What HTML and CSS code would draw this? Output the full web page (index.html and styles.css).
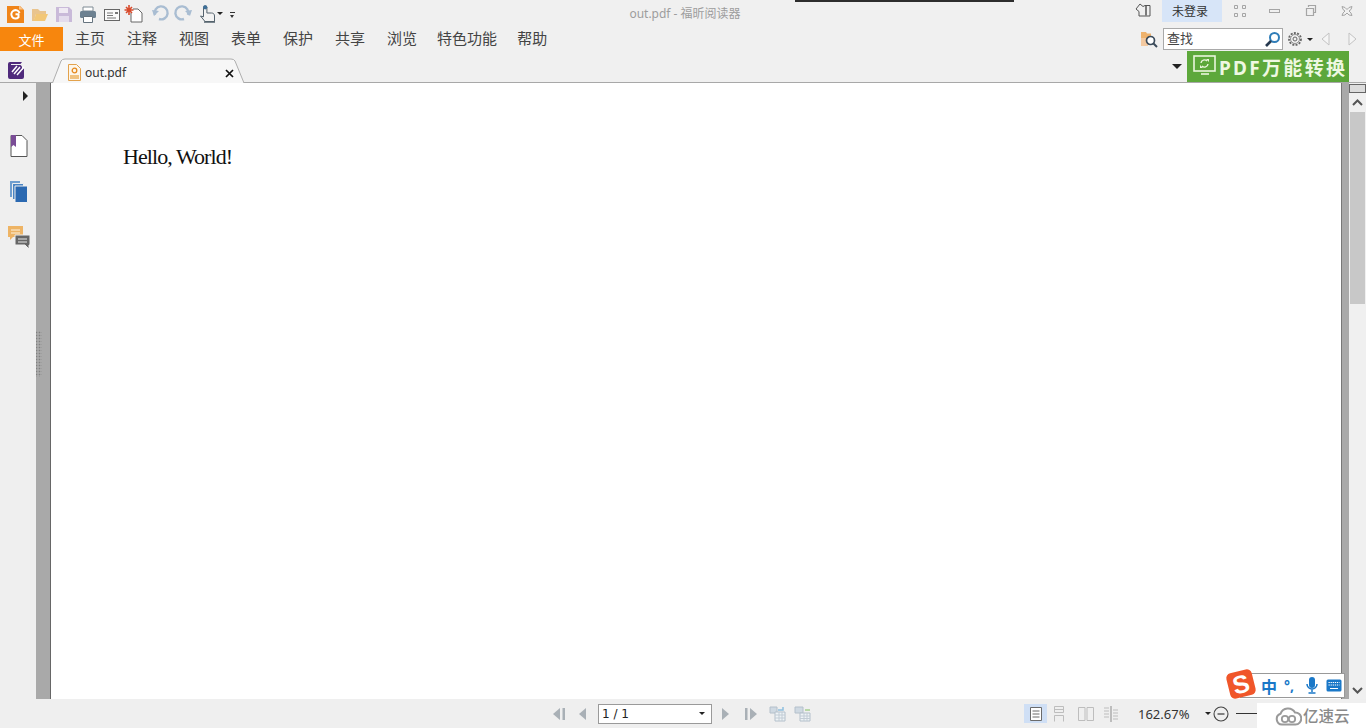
FILE: index.html
```html
<!DOCTYPE html>
<html lang="zh-CN">
<head>
<meta charset="utf-8">
<title>out.pdf - 福昕阅读器</title>
<link rel="stylesheet" href="styles.css">
</head>
<body>
<div class="app">
  <div class="notch"></div>

  <header class="titlebar">
    <div class="quick">
      <svg class="qi" width="24" height="22" viewBox="0 0 24 22"><path d="M5 5h13l4 4v13H5z" fill="#f0851a"/><path d="M17 4.500v4h4z" fill="#f9c78f"/><path d="M17.500 12a4.200 4.200 0 1 0-1 4.300v-3h-3" fill="none" stroke="#fff" stroke-width="2"/></svg>
      <svg class="qi" width="26" height="22" viewBox="0 0 26 22"><path d="M6 8h6l2 2h6v3H10l-2 7H6z" fill="#e9c48e"/><path d="M10 13h12l-3 7H7.500z" fill="#f2c777"/></svg>
      <svg class="qi" width="24" height="22" viewBox="0 0 24 22"><path d="M4 6h13l3 3v12H4z" fill="#c9bad9"/><path d="M7 7h9v5H7z" fill="#efeaf3"/><path d="M7 15h10v6H7z" fill="#e3dcec"/></svg>
      <svg class="qi" width="24" height="22" viewBox="0 0 24 22"><path d="M7 6h10v4H7z" fill="#fff" stroke="#7f8b94"/><rect x="4" y="10" width="16" height="7" rx="1.500" fill="#6d8191"/><path d="M7.500 15.500h9v6h-9z" fill="#fff" stroke="#66747f"/></svg>
      <svg class="qi" width="24" height="22" viewBox="0 0 24 22"><rect x="4.500" y="8.500" width="15" height="11" fill="#fafafa" stroke="#666"/><path d="M7 12h6M7 14.500h6M7 17h9" stroke="#777"/><path d="M15 11h3v2h-3z" fill="#777"/></svg>
      <svg class="qi" width="23" height="22" viewBox="0 0 23 22"><path d="M9 8h5l4 4v9H7v-9" fill="#fff" stroke="#666"/><path d="M5 4v10M0.500 9h9M2 6l6 6M8 6l-6 6" stroke="#d84a2b" stroke-width="1.600"/></svg>
      <svg class="qi" width="25" height="22" viewBox="0 0 25 22"><path d="M8 16a6.500 6.500 0 1 1 4 4" fill="none" stroke="#a9bdd2" stroke-width="2.400" transform="translate(0 -2)"/><path d="M5 9l7 1-5 5z" fill="#a9bdd2"/></svg>
      <svg class="qi" width="24" height="22" viewBox="0 0 24 22"><path d="M16 16a6.500 6.500 0 1 0-4 4" fill="none" stroke="#a9bdd2" stroke-width="2.400" transform="translate(0 -2)"/><path d="M20 9l-7 1 5 5z" fill="#a9bdd2"/></svg>
      <svg class="qi hand" width="18" height="22" viewBox="0 0 18 22"><path d="M4.500 6.500a1.700 1.700 0 0 1 3.400 0V12h4.500c2 0 3.100 1.100 3.100 3v5.500H6L1.500 15l3 .8z" fill="#f3f3f3" stroke="#55636e"/><circle cx="6.200" cy="6.300" r="2.100" fill="#3d6f98"/><path d="M5 21h11" stroke="#55636e" stroke-width="1.500"/></svg>
      <span class="drop qdrop"></span>
      <span class="more"></span>
    </div>
    <div class="wintitle">out.pdf - 福昕阅读器</div>
    <div class="winctl">
      <svg class="skin" width="16" height="16" viewBox="0 0 16 16"><path d="M1 7l4-5 3 2.500 2-1h5v10.500H4V9.500z" fill="none" stroke="#555"/><path d="M11 4v9.500" stroke="#555" stroke-width="1.500"/></svg>
      <div class="login">未登录</div>
      <svg class="wi wi-grid" width="14" height="14" viewBox="0 0 14 14"><path d="M1.500 1.500h3v3h-3zM9.500 1.500h3v3h-3zM1.500 9.500h3v3h-3zM9.500 9.500h3v3h-3z" fill="none" stroke="#a5a5a5"/></svg>
      <svg class="wi wi-min" width="12" height="14" viewBox="0 0 12 14"><rect x="0.500" y="5.500" width="10" height="3" fill="none" stroke="#a5a5a5"/></svg>
      <svg class="wi wi-max" width="12" height="14" viewBox="0 0 12 14"><path d="M3.500 3V1.500h7v7H9M1.500 4.500h7v7h-7z" fill="none" stroke="#a5a5a5" stroke-width="1.200"/></svg>
      <svg class="wi wi-close" width="12" height="14" viewBox="0 0 12 14"><path d="M1 2.500l3 1 2 2 2-2 3-1-1 3-2 1.500 2 2 1 2.500-3-.5-2-2-2 2-3 .5 1-2.500 2-2-2-1.500z" fill="none" stroke="#a5a5a5"/></svg>
    </div>
  </header>

  <nav class="menubar">
    <div class="filebtn">文件</div>
    <ul class="menu">
      <li>主页</li><li>注释</li><li>视图</li><li>表单</li><li>保护</li><li>共享</li><li>浏览</li><li class="wide">特色功能</li><li>帮助</li>
    </ul>
    <div class="searchwrap">
      <svg class="findfolder" width="18" height="18" viewBox="0 0 18 18"><path d="M1 2h5l1 1.500h4V8H1z" fill="#eeb26d"/><path d="M1 8h7v8H1z" fill="#f3c9a0"/><circle cx="10.500" cy="10.500" r="4" fill="#fff" stroke="#3a4a5a" stroke-width="1.700"/><path d="M13.500 13.500l3.500 3.500" stroke="#3a4a5a" stroke-width="2"/></svg>
      <div class="search"><span>查找</span>
        <svg width="17" height="17" viewBox="0 0 17 17"><circle cx="10.500" cy="6.500" r="4.500" fill="#fff" stroke="#2f7db8" stroke-width="2"/><path d="M7 10l-5 5" stroke="#26394f" stroke-width="2.600"/></svg>
      </div>
      <svg class="gear" width="16" height="16" viewBox="0 0 16 16"><circle cx="8" cy="8" r="6" fill="none" stroke="#666" stroke-width="1.800" stroke-dasharray="2 1.300"/><circle cx="8" cy="8" r="4.500" fill="none" stroke="#777" stroke-width=".8"/><circle cx="8" cy="8" r="2" fill="none" stroke="#666"/></svg>
      <span class="drop"></span>
      <svg class="navl" width="9" height="14" viewBox="0 0 9 14"><path d="M8 1v12L1 7z" fill="#f5f5f5" stroke="#c3c3c3"/></svg>
      <svg class="navr" width="9" height="14" viewBox="0 0 9 14"><path d="M1 1v12l7-6z" fill="#f5f5f5" stroke="#c3c3c3"/></svg>
    </div>
  </nav>

  <div class="tabbar">
    <svg class="fx" width="20" height="19" viewBox="0 0 20 19"><path d="M3 1h12l-1.500 2H4v12h11V9l2-2v9a2 2 0 0 1-2 2H3a2 2 0 0 1-2-2V3a2 2 0 0 1 2-2z" fill="#4f2a7c"/><path d="M4 4h9.500L15 5.500V15H4z" fill="#4f2a7c"/><path d="M5 11l5-6M7 13l6-7M10 14l7-8" stroke="#fff" stroke-width="1.500"/></svg>
    <div class="tab">
      <svg class="tabshape" width="193" height="25" viewBox="0 0 193 25"><path d="M0.500 25L9 3Q10 1 13 1H179Q182 1 183 3L192 25" fill="#f7f7f7" stroke="#aeaeae"/></svg>
      <svg class="tabicon" width="13" height="17" viewBox="0 0 13 17"><path d="M.5.500h8l4 4v12H.5z" fill="#fdf6ea" stroke="#e3a24c"/><circle cx="6.500" cy="6.500" r="2.300" fill="none" stroke="#e58a1e" stroke-width="1.300"/><path d="M2 11h9v4H2z" fill="#f0c27f"/></svg>
      <span class="tabname">out.pdf</span>
      <svg class="tabx" width="9" height="9" viewBox="0 0 9 9"><path d="M1 1l7 7M8 1L1 8" stroke="#111" stroke-width="1.700"/></svg>
    </div>
    <div class="tabright">
      <span class="drop big"></span>
      <div class="banner">
        <svg width="24" height="22" viewBox="0 0 24 22"><rect x="1" y="1" width="21" height="15" fill="none" stroke="#eaf5dd" stroke-width="1.600"/><path d="M8 19h8" stroke="#eaf5dd" stroke-width="1.600"/><path d="M8 8a3.500 3.500 0 0 1 6-2M15 9a3.500 3.500 0 0 1-6 2" fill="none" stroke="#eaf5dd" stroke-width="1.400"/><path d="M13 4h3v3zM10 13H7v-3z" fill="#eaf5dd"/></svg>
        <span class="bannertext">PDF万能转换</span>
      </div>
    </div>
  </div>

  <main class="workspace">
    <aside class="side">
      <span class="tri"></span>
      <svg class="sb1" width="18" height="22" viewBox="0 0 18 22"><path d="M1 .5h11l5 5v16H1z" fill="#fff" stroke="#555"/><path d="M1 0h5v12l-2.500-2L1 12z" fill="#7a4d96"/></svg>
      <svg class="sb2" width="19" height="23" viewBox="0 0 19 23"><path d="M1 1h10v16H1z" fill="#6f9ecf"/><path d="M3.500 3.500h11v16h-11z" fill="#4a84c2" stroke="#efefef"/><path d="M6 6h12.500v16.500H6z" fill="#2b69b1" stroke="#efefef"/></svg>
      <svg class="sb3" width="24" height="25" viewBox="0 0 24 25"><path d="M1 1h15v11H6l-3 3v-3H1z" fill="#eeb465"/><path d="M4 5h9M4 8h9" stroke="#fdf3e2"/><path d="M8 10h15v10h-1v4l-4-4H8z" fill="#666" stroke="#efefef"/><path d="M11 14h9M11 17h9" stroke="#e8e8e8"/></svg>
    </aside>
    <div class="split"><div class="grip"></div></div>
    <section class="page"><p class="hello">Hello, World!</p></section>
    <div class="rail"></div>
    <div class="scroll">
      <div class="scrollcap"></div>
      <svg class="chev" width="11" height="7" viewBox="0 0 11 7"><path d="M1 6l4.500-4.500L10 6" fill="none" stroke="#555" stroke-width="2"/></svg>
      <div class="thumb"></div>
      <svg class="chev chev-b" width="11" height="7" viewBox="0 0 11 7"><path d="M1 1l4.500 4.500L10 1" fill="none" stroke="#555" stroke-width="2"/></svg>
    </div>
  </main>

  <footer class="status">
    <div class="pager">
      <svg width="14" height="14" viewBox="0 0 14 14"><path d="M8 1v12L1 7z" fill="#a9b0b6"/><path d="M10.500 1h2.500v12h-2.500z" fill="#a9b0b6"/></svg>
      <svg class="p2" width="9" height="14" viewBox="0 0 9 14"><path d="M8 1v12L1 7z" fill="#a9b0b6"/></svg>
      <div class="combo"><span>1 / 1</span><span class="drop"></span></div>
      <svg class="p3" width="9" height="14" viewBox="0 0 9 14"><path d="M1 1v12l7-6z" fill="#a9b0b6"/></svg>
      <svg class="p4" width="14" height="14" viewBox="0 0 14 14"><path d="M1 1h2.500v12H1zM6 1v12l7-6z" fill="#a9b0b6"/></svg>
      <svg class="p5" width="17" height="16" viewBox="0 0 17 16"><path d="M1 1h7v6H1z" fill="#cfd9e2" stroke="#b4c0cb"/><path d="M6 6h10v9H6z" fill="#eef3f6" stroke="#b4c0cb"/><path d="M6 9h10M6 12h10M10 6v9M13 6v9" stroke="#c2ccd5"/><path d="M9 4h5V1" fill="none" stroke="#8fc0df" stroke-width="1.500"/></svg>
      <svg class="p6" width="17" height="16" viewBox="0 0 17 16"><path d="M1 1h8v6H1z" fill="#cfd9e2" stroke="#b4c0cb"/><path d="M6 7h10v8H6z" fill="#eef3f6" stroke="#b4c0cb"/><path d="M6 10h10M6 12.500h10M10 7v8M13 7v8" stroke="#c2ccd5"/><path d="M11 4h5" stroke="#a4cf8f" stroke-width="1.500"/></svg>
    </div>
    <div class="views">
      <div class="view on"><svg width="14" height="16" viewBox="0 0 14 16"><path d="M1.500 1.500h11v13h-11z" fill="#fff" stroke="#6b6b6b"/><path d="M3.500 5h7M3.500 8h7M3.500 11h7" stroke="#6b6b6b"/></svg></div>
      <svg class="v2" width="12" height="16" viewBox="0 0 12 16"><path d="M1.500.5h9v6h-9zM1.500 9.500h9v6M1.500 9.500v6M1.500 3.500h9" fill="none" stroke="#bdbdbd"/></svg>
      <svg class="v3" width="16" height="14" viewBox="0 0 16 14"><path d="M.5.500h6.500v13H.5zM9 .5h6.500v13H9z" fill="none" stroke="#bdbdbd"/></svg>
      <svg class="v4" width="16" height="16" viewBox="0 0 16 16"><path d="M7.500 0v16M8.500 0v16M1 2h5M1 5h5M1 8h5M1 11h5M10 4h5M10 7h5M10 10h5M10 13h5" stroke="#bdbdbd"/></svg>
      <span class="zoomval">162.67%</span>
      <span class="drop z"></span>
      <svg class="zm" width="16" height="16" viewBox="0 0 16 16"><circle cx="8" cy="8" r="7" fill="none" stroke="#444" stroke-width="1.100"/><path d="M4.500 8h7" stroke="#444" stroke-width="1.300"/></svg>
      <div class="zline"></div>
    </div>
  </footer>

  <div class="ime">
    <div class="ime-logo"><span>S</span></div>
    <div class="ime-bar">
      <span class="ime-zh">中</span>
      <span class="ime-pt">°,</span>
      <svg class="ime-mic" width="12" height="17" viewBox="0 0 12 17"><rect x="3" y="0" width="6" height="11" rx="3" fill="#1a78c8"/><path d="M1 7a5 5 0 0 0 10 0M6 12v3M2.500 16h7" fill="none" stroke="#1a78c8" stroke-width="1.500"/></svg>
      <svg class="ime-kb" width="16" height="13" viewBox="0 0 16 13"><rect x=".5" y=".5" width="15" height="12" rx="1.500" fill="#1a78c8"/><path d="M2.500 3.500h11M2.500 6h11" stroke="#fff" stroke-dasharray="1.300 .8"/><path d="M4 9.500h8" stroke="#fff"/></svg>
    </div>
  </div>

  <div class="mark">
    <svg width="27" height="20" viewBox="0 0 27 20"><path d="M7 18.500a5.500 5.500 0 0 1-1.500-10.700A8 8 0 0 1 20 6.500a6 6 0 0 1 .5 12z" fill="none" stroke="#9a9a9a" stroke-width="2"/><circle cx="10" cy="13" r="3.200" fill="none" stroke="#9a9a9a" stroke-width="1.800"/><circle cx="17" cy="13" r="3.200" fill="none" stroke="#9a9a9a" stroke-width="1.800"/></svg>
    <span>亿速云</span>
  </div>
</div>
</body>
</html>
```

FILE: styles.css
```css
* { box-sizing: border-box; }
html, body { margin: 0; padding: 0; height: 100%; overflow: hidden; }
body { font-family: "Noto Sans", "Noto Sans CJK SC", sans-serif; background: #f0f0f0; color: #333; }
svg { display: block; flex: none; }

.app { position: relative; width: 1366px; height: 728px; display: flex; flex-direction: column; background: #f0f0f0; overflow: hidden; }
.notch { position: absolute; left: 795px; top: 0; width: 219px; height: 2px; background: #2d2d2d; }

.titlebar { height: 27px; display: grid; grid-template-columns: 1fr auto 1fr; align-items: start; }
.quick { display: flex; align-items: flex-start; padding-left: 2px; padding-top: 1px; }
.hand { margin-left: 3px; }
.qdrop { margin: 11px 0 0 0; }
.more { width: 5px; height: 7px; margin: 11px 0 0 7px; border-top: 1px solid #333; position: relative; }
.more::after { content: ""; position: absolute; left: 0; top: 2px; border-left: 2.500px solid transparent; border-right: 2.500px solid transparent; border-top: 3px solid #333; }
.wintitle { font-size: 12px; line-height: 28px; color: #9d9d9d; padding-left: 4px; }
.winctl { display: flex; align-items: flex-start; justify-content: flex-end; }
.skin { margin: 2px 11px 0 0; }
.login { width: 60px; height: 22px; padding-right: 4px; background: #d7e5f8; font-size: 12px; line-height: 23px; text-align: center; color: #333; }
.wi { margin-top: 4px; }
.wi-grid { margin-left: 11px; }
.wi-min { margin-left: 22px; }
.wi-max { margin-left: 24px; }
.wi-close { margin-left: 24px; margin-right: 13px; }

.menubar { height: 25px; display: flex; align-items: flex-start; }
.filebtn { width: 63px; height: 24px; background: #f7860d; color: #fff; font-size: 13px; line-height: 27px; text-align: center; }
.menu { list-style: none; display: flex; gap: 22px; margin: 0; padding: 0 0 0 12px; font-size: 15px; line-height: 23px; color: #444; }
.menu .wide { margin: 0 -2px; }
.searchwrap { margin-left: auto; display: flex; align-items: flex-start; padding-top: 1px; }
.findfolder { margin-top: 2px; }
.search { width: 120px; height: 22px; margin-left: 5px; border: 1px solid #a9a9a9; background: #fff; display: flex; justify-content: space-between; align-items: center; padding: 0 1px 0 3px; font-size: 13px; line-height: 18px; color: #444; }
.search span { margin-top: -2px; }
.gear { margin: 3px 0 0 4px; }
.searchwrap .drop { margin: 10px 0 0 4px; }
.navl { margin: 4px 0 0 8px; }
.navr { margin: 4px 9px 0 18px; }

.drop { display: inline-block; width: 0; height: 0; border-left: 3px solid transparent; border-right: 3px solid transparent; border-top: 3px solid #222; flex: none; }
.drop.big { border-left-width: 5px; border-right-width: 5px; border-top-width: 5px; margin-right: 5px; }

.tabbar { height: 31px; display: flex; align-items: flex-end; border-bottom: 1px solid #a8a8a8; position: relative; }
.fx { margin: 0 0 2px 7px; }
.tab { position: relative; width: 193px; height: 25px; margin: 0 0 -1px 25px; display: flex; align-items: center; padding: 4px 10px 0 16px; }
.tabshape { position: absolute; left: 0; top: 0; }
.tabicon { position: relative; }
.tabname { position: relative; margin-left: 4px; font-size: 12px; color: #333; }
.tabx { position: relative; margin-left: auto; margin-right: 1px; margin-top: 2px; }
.tabright { margin-left: auto; display: flex; align-items: center; margin-right: 17px; }
.banner { width: 162px; height: 31px; background: linear-gradient(135deg, #5da83b 0 76%, #5aa439); display: flex; align-items: center; padding-left: 6px; gap: 2px; color: #eef8e2; font-weight: 700; font-size: 19px; letter-spacing: 2.300px; white-space: nowrap; overflow: hidden; }
.bannertext { margin-top: 2px; }

.workspace { height: 617px; display: flex; }
.side { width: 36px; display: flex; flex-direction: column; background: #efefef; }
.tri { width: 0; height: 0; border-top: 5px solid transparent; border-bottom: 5px solid transparent; border-left: 5px solid #222; margin: 8px 0 0 23px; }
.sb1 { margin: 34px 0 0 10px; }
.sb2 { margin: 23px 0 0 9px; }
.sb3 { margin: 22px 0 0 7px; }
.split { width: 15px; background: #a9a9a9; border-right: 1px solid #666; padding-top: 248px; }
.grip { width: 6px; height: 46px; background-image: radial-gradient(#808080 0.700px, transparent 1.100px); background-size: 3px 3px; background-position: 2px 0; }
.page { flex: 1; background: #fff; padding: 61px 0 0 72px; }
.hello { margin: 0; font-family: "Liberation Serif", serif; font-size: 22px; line-height: 25px; letter-spacing: -0.930px; color: #111; }
.rail { width: 8px; background: #a9a9a9; border-left: 1px solid #777; }
.scroll { width: 17px; background: #f0f0f0; display: flex; flex-direction: column; align-items: center; position: relative; }
.scrollcap { width: 17px; height: 9px; margin-top: 1px; background: #dcdcdc; border: 1px solid #666; }
.chev { margin-top: 6px; }
.thumb { width: 15px; height: 192px; margin-top: 6px; background: #c8c8c8; }
.chev-b { margin-top: auto; margin-bottom: 5px; }

.status { height: 29px; display: flex; align-items: center; background: #efefef; padding-left: 552px; }
.pager { display: flex; align-items: center; }
.p2 { margin-left: 12px; }
.combo { width: 114px; height: 20px; margin-left: 11px; background: #fff; border: 1px solid #9a9a9a; display: flex; align-items: center; justify-content: space-between; padding: 0 6px 0 3px; font-family: "DejaVu Sans", sans-serif; font-size: 12px; color: #222; }
.p3 { margin-left: 9px; }
.p4 { margin-left: 14px; }
.p5 { margin-left: 11px; }
.p6 { margin-left: 8px; }
.views { display: flex; align-items: center; margin-left: 213px; }
.view.on { width: 23px; height: 19px; background: #cfdff5; display: flex; align-items: center; justify-content: center; }
.v2 { margin-left: 6px; }
.v3 { margin-left: 13px; }
.v4 { margin-left: 9px; }
.zoomval { margin-left: 19px; font-size: 13px; color: #333; width: 64px; }
.drop.z { margin-left: 3px; }
.zm { margin-left: 2px; }
.zline { width: 30px; height: 1px; margin-left: 7px; background: #333; }

.ime { position: absolute; left: 1228px; top: 670px; height: 28px; display: flex; }
.ime-logo { position: absolute; left: 0; top: 1px; width: 26px; height: 26px; z-index: 1; border-radius: 5px; background: #f0562a; transform: rotate(-14deg); color: #fff; font: 900 25px/26px "Liberation Sans", sans-serif; text-align: center; }
.ime-bar { margin: 3px 0 0 12px; width: 105px; height: 25px; background: #fff; border: 1px solid #999; display: flex; align-items: center; padding-left: 20px; color: #1a78c8; }
.ime-zh { font-size: 16px; font-weight: 700; width: 23px; }
.ime-pt { font-size: 14px; font-weight: 700; width: 22px; }
.ime-kb { margin-left: 8px; }

.mark { position: absolute; left: 1257px; top: 703px; width: 109px; height: 25px; background: #fff; display: flex; align-items: center; padding-left: 18px; gap: 1px; color: #8a8a8a; font-size: 15.500px; font-weight: 500; }
```
